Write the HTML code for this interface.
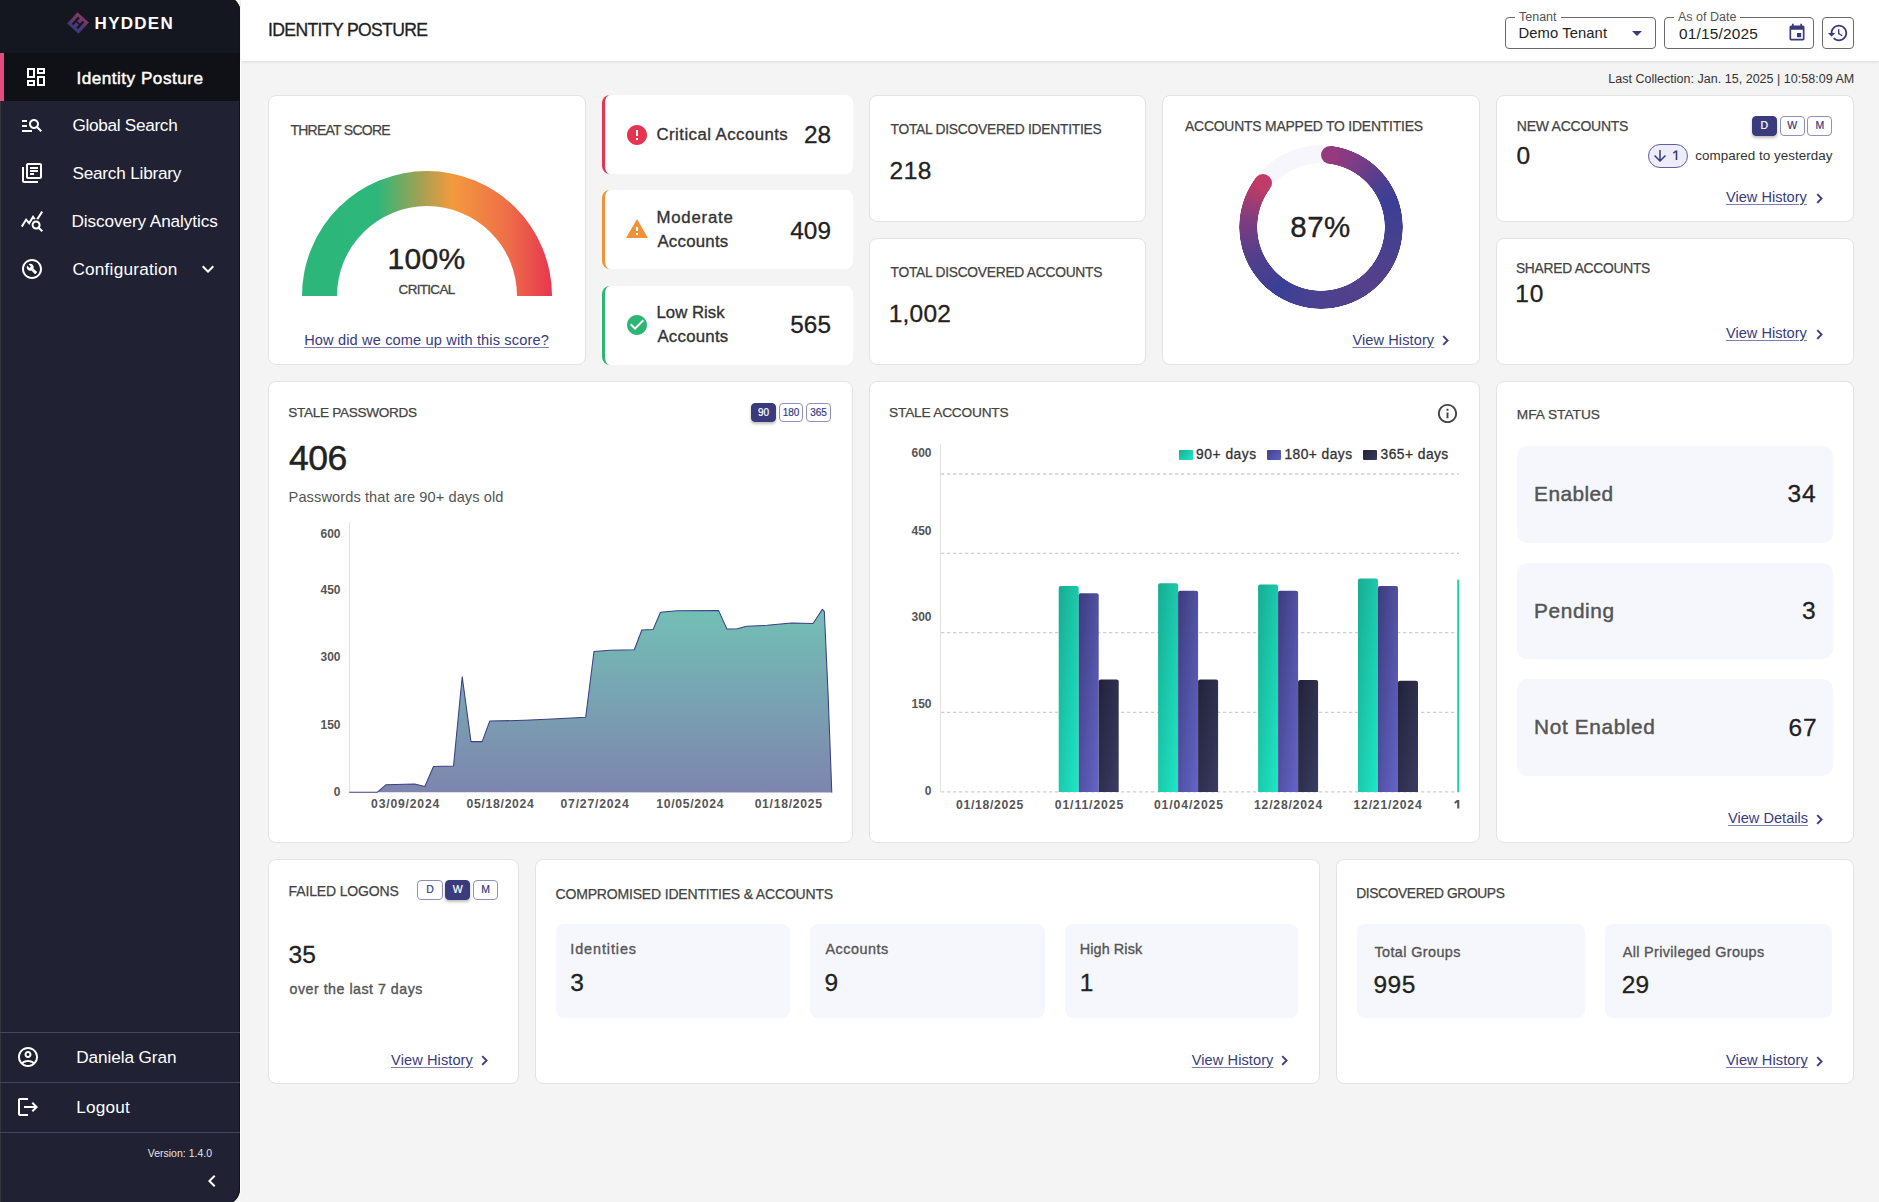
<!DOCTYPE html><html><head><meta charset="utf-8"><style>
*{box-sizing:border-box;margin:0;padding:0}
html,body{width:1879px;height:1202px;overflow:hidden;background:#f4f4f4;font-family:"Liberation Sans",sans-serif;}
.t{position:absolute;line-height:1;white-space:nowrap;}
.card{position:absolute;background:#fff;border:1px solid #e3e3e3;border-radius:8px;}
.lnk{text-decoration:underline;text-underline-offset:2px;text-decoration-thickness:1px;}

</style></head><body>
<div style="position:absolute;left:0;top:-3px;width:240px;height:1208px;background:#202133;border-radius:0 14px 16px 0;overflow:hidden;box-shadow:1px 0 0 #fff, inset -1px 0 0 #10111f, inset 1px 0 0 #34353f">
<div style="position:absolute;left:0;top:0;width:240px;height:56px;background:#151720"></div>
<div style="position:absolute;left:0;top:56px;width:240px;height:48px;background:#101116"></div>
<div style="position:absolute;left:0;top:56px;width:4px;height:48px;background:#e64b7f"></div>
<div style="position:absolute;left:0;top:1035px;width:240px;height:1px;background:#44455e"></div>
<div style="position:absolute;left:0;top:1085px;width:240px;height:1px;background:#44455e"></div>
<div style="position:absolute;left:0;top:1135px;width:240px;height:1px;background:#44455e"></div>
</div>
<svg style="position:absolute;left:66px;top:11px;" width="24" height="24" viewBox="0 0 24 24"><defs><linearGradient id="lg" x1="0" y1="0" x2="0.3" y2="1"><stop offset="0" stop-color="#a83e6c"/><stop offset="1" stop-color="#46408e"/></linearGradient></defs>
<g transform="rotate(42 12 12)"><rect x="4.3" y="4.3" width="15.4" height="15.4" fill="url(#lg)" opacity="0.82"/>
<path d="M7.8 7.3h2.3v3.9h3.8V7.3h2.3v9.4h-2.3v-3.9h-3.8v3.9H7.8z" fill="#151720"/></g></svg>
<div class="t" id="t0" style="top:15.01px;font-size:17px;color:#fff;font-weight:700;letter-spacing:1.26px;left:94.6px;">HYDDEN</div>
<svg style="position:absolute;left:24px;top:65px;" width="24" height="24" viewBox="0 0 24 24"><path fill="#fff" d="M19 5v2h-4V5h4M9 5v6H5V5h4m10 8v6h-4v-6h4M9 17v2H5v-2h4M21 3h-8v6h8V3zM11 3H3v10h8V3zm10 8h-8v10h8V11zm-10 4H3v6h8v-6z"/></svg>
<div class="t" id="t1" style="top:69.84px;font-size:17.2px;color:#fff;letter-spacing:0.48px;-webkit-text-stroke:0.45px #fff;left:76.39999999999999px;">Identity Posture</div>
<svg style="position:absolute;left:20px;top:113px;" width="24" height="24" viewBox="0 0 24 24"><path fill="#fff" d="M7 9H2V7h5v2zm0 3H2v2h5v-2zm13.59 7l-3.83-3.83c-.8.52-1.74.83-2.76.83-2.76 0-5-2.24-5-5s2.24-5 5-5 5 2.24 5 5c0 1.02-.31 1.96-.83 2.75L22 17.59 20.59 19zM17 11c0-1.65-1.35-3-3-3s-3 1.35-3 3 1.35 3 3 3 3-1.35 3-3zM2 19h10v-2H2v2z"/></svg>
<div class="t" id="t2" style="top:117.44px;font-size:17.2px;color:#fff;letter-spacing:-0.3px;left:72.39999999999999px;">Global Search</div>
<svg style="position:absolute;left:20px;top:161px;" width="24" height="24" viewBox="0 0 24 24"><path fill="#fff" d="M4 6H2v14c0 1.1.9 2 2 2h14v-2H4V6zm16-4H8c-1.1 0-2 .9-2 2v12c0 1.1.9 2 2 2h12c1.1 0 2-.9 2-2V4c0-1.1-.9-2-2-2zm0 14H8V4h12v12zM10 9h8v2h-8zm0 3h4v2h-4zm0-6h8v2h-8z"/></svg>
<div class="t" id="t3" style="top:165.44px;font-size:17.2px;color:#fff;letter-spacing:-0.208px;left:72.39999999999999px;">Search Library</div>
<svg style="position:absolute;left:20px;top:209px;" width="24" height="24" viewBox="0 0 24 24"><path fill="#fff" d="M19.88 18.47c.44-.7.7-1.51.7-2.39 0-2.49-2.01-4.5-4.5-4.5s-4.5 2.01-4.5 4.5 2.01 4.5 4.49 4.5c.88 0 1.7-.26 2.39-.7L21.58 23 23 21.58l-3.12-3.11zm-3.8.11c-1.38 0-2.5-1.12-2.5-2.5s1.12-2.5 2.5-2.5 2.5 1.12 2.5 2.5-1.120 2.5-2.5 2.5zm-.36-8.5c-.74.02-1.45.18-2.1.45l-.55-.83-3.8 6.18-3.01-3.52-3.63 5.81L1 17l5-8 3 3.5L13 6l2.72 4.08zm2.59.5c-.64-.28-1.33-.45-2.05-.49L21.38 2 23 3.18l-4.690 7.4z"/></svg>
<div class="t" id="t4" style="top:213.44px;font-size:17.2px;color:#fff;letter-spacing:-0.1px;left:71.5px;">Discovery Analytics</div>
<svg style="position:absolute;left:20px;top:257px;" width="24" height="24" viewBox="0 0 24 24"><path fill="#fff" d="M12 2C6.48 2 2 6.48 2 12s4.48 10 10 10 10-4.48 10-10S17.52 2 12 2zm0 18c-4.41 0-8-3.59-8-8s3.59-8 8-8 8 3.59 8 8-3.59 8-8 8zM13.49 11.38c.43-1.22.17-2.64-.81-3.62-1.11-1.11-2.79-1.3-4.1-.59l2.35 2.35-1.41 1.41-2.35-2.35c-.71 1.32-.52 2.99.59 4.1.98.98 2.4 1.24 3.62.81l3.41 3.41c.2.2.51.2.71 0l1.4-1.4c.2-.2.2-.51 0-.71l-3.41-3.41z"/></svg>
<div class="t" id="t5" style="top:261.44px;font-size:17.2px;color:#fff;letter-spacing:0.23px;left:72.39999999999999px;">Configuration</div>
<svg style="position:absolute;left:196px;top:257px;" width="24" height="24" viewBox="0 0 24 24"><path fill="#fff" d="M16.59 8.59L12 13.17 7.41 8.59 6 10l6 6 6-6z"/></svg>
<svg style="position:absolute;left:16px;top:1045px;" width="24" height="24" viewBox="0 0 24 24"><path fill="#fff" d="M12 2C6.48 2 2 6.48 2 12s4.48 10 10 10 10-4.48 10-10S17.52 2 12 2zM7.35 18.5C8.66 17.56 10.26 17 12 17s3.34.56 4.65 1.5c-1.310.94-2.91 1.5-4.65 1.5s-3.34-.56-4.65-1.5zm10.79-1.38C16.45 15.8 14.32 15 12 15s-4.45.8-6.14 2.12C4.7 15.73 4 13.95 4 12c0-4.42 3.58-8 8-8s8 3.58 8 8c0 1.95-.7 3.73-1.86 5.12zM12 6c-1.93 0-3.5 1.57-3.5 3.5S10.07 13 12 13s3.5-1.57 3.5-3.5S13.93 6 12 6zm0 5c-.83 0-1.5-.67-1.5-1.5S11.17 8 12 8s1.5.67 1.5 1.5S12.83 11 12 11z"/></svg>
<div class="t" id="t6" style="top:1048.94px;font-size:17.2px;color:#fff;letter-spacing:-0.084px;left:76.19999999999999px;">Daniela Gran</div>
<svg style="position:absolute;left:16px;top:1095px;" width="24" height="24" viewBox="0 0 24 24"><path fill="#fff" d="M17 7l-1.41 1.41L18.17 11H8v2h10.17l-2.58 2.58L17 17l5-5zM4 5h8V3H4c-1.1 0-2 .9-2 2v14c0 1.1.9 2 2 2h8v-2H4V5z"/></svg>
<div class="t" id="t7" style="top:1098.84px;font-size:17.2px;color:#fff;letter-spacing:0.18px;left:76.19999999999999px;">Logout</div>
<div class="t" id="t8" style="top:1148.31px;font-size:10.5px;color:#e6e6ea;right:1667.00px;">Version: 1.4.0</div>
<svg style="position:absolute;left:200px;top:1169px;" width="24" height="24" viewBox="0 0 24 24"><path fill="#fff" d="M15.41 7.41L14 6l-6 6 6 6 1.41-1.41L10.83 12z"/></svg>
<div style="position:absolute;left:241px;top:0;width:1638px;height:61px;background:#fff;box-shadow:0 1px 3px rgba(0,0,0,0.10)"></div>
<div class="t" id="t9" style="top:22.10px;font-size:17.6px;color:#222;letter-spacing:-0.6599999999999999px;-webkit-text-stroke:0.3px #222;left:268.1px;">IDENTITY POSTURE</div>
<div style="position:absolute;left:1505px;top:17px;width:151px;height:32px;border:1px solid #6a6a6a;border-radius:4px;background:#fff"></div>
<div class="t" style="left:1515px;top:10px;font-size:12.5px;color:#555;background:#fff;padding:0 4px;line-height:14px">Tenant</div>
<div class="t" id="t10" style="top:25.87px;font-size:14.8px;color:#222;letter-spacing:0.09px;left:1518.3999999999999px;">Demo Tenant</div>
<svg style="position:absolute;left:1625px;top:21px;" width="24" height="24" viewBox="0 0 24 24"><path fill="#393b7d" d="M7 10l5 5 5-5z"/></svg>
<div style="position:absolute;left:1664px;top:17px;width:150px;height:32px;border:1px solid #6a6a6a;border-radius:4px;background:#fff"></div>
<div class="t" style="left:1674px;top:10px;font-size:12.5px;color:#555;background:#fff;padding:0 4px;line-height:14px">As of Date</div>
<div class="t" id="t11" style="top:26.46px;font-size:15.4px;color:#222;letter-spacing:0.2px;left:1679.1px;">01/15/2025</div>
<svg style="position:absolute;left:1786.5px;top:23px;" width="20" height="20" viewBox="0 0 24 24"><path fill="#393b7d" d="M17 12h-5v5h5v-5zM16 1v2H8V1H6v2H5c-1.11 0-1.99.9-1.99 2L3 19c0 1.1.89 2 2 2h14c1.1 0 2-.9 2-2V5c0-1.1-.9-2-2-2h-1V1h-2zm3 18H5V8h14v11z"/></svg>
<div style="position:absolute;left:1822px;top:17px;width:32px;height:32px;border:1px solid #6a6a6a;border-radius:4px;background:#fff"></div>
<svg style="position:absolute;left:1827px;top:22px;" width="22" height="22" viewBox="0 0 24 24"><path fill="#393b7d" d="M13 3c-4.97 0-9 4.03-9 9H1l3.89 3.89.07.14L9 12H6c0-3.87 3.13-7 7-7s7 3.13 7 7-3.13 7-7 7c-1.93 0-3.68-.79-4.94-2.06l-1.42 1.42C8.27 19.99 10.51 21 13 21c4.97 0 9-4.03 9-9s-4.03-9-9-9zm-1 5v5l4.28 2.54.72-1.21-3.5-2.08V8H12z"/></svg>
<div class="t" id="t12" style="top:72.82px;font-size:12.5px;color:#333;letter-spacing:0.019px;right:24.80px;">Last Collection: Jan. 15, 2025 | 10:58:09 AM</div>
<div class="card" style="left:268px;top:95px;width:318px;height:270px;"></div>
<div class="t" id="t13" style="top:123.35px;font-size:14.0px;color:#444;letter-spacing:-0.736px;-webkit-text-stroke:0.25px #444;left:290.4px;">THREAT SCORE</div>
<svg style="position:absolute;left:302px;top:171px;" width="250" height="126" viewBox="302 171 250 126"><defs><linearGradient id="gg" x1="302" y1="0" x2="552" y2="0" gradientUnits="userSpaceOnUse">
<stop offset="0" stop-color="#2cb67a"/><stop offset="0.3" stop-color="#2eb77a"/><stop offset="0.48" stop-color="#a7a052"/><stop offset="0.6" stop-color="#f39a3d"/><stop offset="0.82" stop-color="#ee6f48"/><stop offset="1" stop-color="#e6374f"/></linearGradient></defs>
<path d="M302 296 A125 125 0 0 1 552 296 L517 296 A90 90 0 0 0 337 296 Z" fill="url(#gg)"/></svg>
<div class="t" id="t14" style="top:243.70px;font-size:30px;color:#222;letter-spacing:0.3px;-webkit-text-stroke:0.4px #222;left:126.55000000000001px;width:600px;text-align:center;">100%</div>
<div class="t" id="t15" style="top:283.36px;font-size:13.4px;color:#444;letter-spacing:-0.643px;-webkit-text-stroke:0.3px #444;left:126.55000000000001px;width:600px;text-align:center;">CRITICAL</div>
<div class="t" id="t16" style="top:333.44px;font-size:14.6px;color:#393b7d;letter-spacing:0.132px;left:126.55000000000001px;width:600px;text-align:center;text-decoration:underline;text-underline-offset:1.5px;text-decoration-thickness:1px;text-decoration-color:#7d7fae;">How did we come up with this score?</div>
<div style="position:absolute;left:602px;top:95px;width:251px;height:79px;background:#fff;border-radius:8px;border-left:3px solid #e5344f"></div>
<div style="position:absolute;left:602px;top:190px;width:251px;height:79px;background:#fff;border-radius:8px;border-left:3px solid #f0923a"></div>
<div style="position:absolute;left:602px;top:286px;width:251px;height:79px;background:#fff;border-radius:8px;border-left:3px solid #2bb673"></div>
<svg style="position:absolute;left:625px;top:123px;" width="24" height="24" viewBox="0 0 24 24"><path fill="#e5344f" d="M12 2C6.48 2 2 6.480 2 12s4.48 10 10 10 10-4.48 10-10S17.52 2 12 2zm1 15h-2v-2h2v2zm0-4h-2V7h2v6z"/></svg>
<div class="t" id="t17" style="top:126.98px;font-size:16.8px;color:#333;letter-spacing:0.45px;-webkit-text-stroke:0.35px #333;left:656.5px;">Critical Accounts</div>
<div class="t" id="t18" style="top:123.23px;font-size:24.3px;color:#222;-webkit-text-stroke:0.3px #222;right:1048.10px;">28</div>
<svg style="position:absolute;left:625px;top:217px;" width="24" height="24" viewBox="0 0 24 24"><path fill="#f0923a" d="M1 21h22L12 2 1 21zm12-3h-2v-2h2v2zm0-4h-2v-4h2v4z"/></svg>
<div class="t" id="t19" style="top:209.98px;font-size:16.8px;color:#333;letter-spacing:0.771px;-webkit-text-stroke:0.35px #333;left:656.5px;">Moderate</div>
<div class="t" id="t20" style="top:233.98px;font-size:16.8px;color:#333;letter-spacing:0.255px;-webkit-text-stroke:0.35px #333;left:657.4px;">Accounts</div>
<div class="t" id="t21" style="top:218.63px;font-size:24.3px;color:#222;-webkit-text-stroke:0.3px #222;right:1048.10px;">409</div>
<svg style="position:absolute;left:625px;top:313px;" width="24" height="24" viewBox="0 0 24 24"><path fill="#2bb673" d="M12 2C6.48 2 2 6.48 2 12s4.48 10 10 10 10-4.48 10-10S17.52 2 12 2zm-2 15l-5-5 1.41-1.41L10 14.17l7.59-7.59L19 8l-9 9z"/></svg>
<div class="t" id="t22" style="top:304.98px;font-size:16.8px;color:#333;letter-spacing:0.002px;-webkit-text-stroke:0.35px #333;left:656.5px;">Low Risk</div>
<div class="t" id="t23" style="top:328.98px;font-size:16.8px;color:#333;letter-spacing:0.255px;-webkit-text-stroke:0.35px #333;left:657.4px;">Accounts</div>
<div class="t" id="t24" style="top:312.63px;font-size:24.3px;color:#222;-webkit-text-stroke:0.3px #222;right:1048.10px;">565</div>
<div class="card" style="left:869px;top:95px;width:277px;height:127px;"></div>
<div class="t" id="t25" style="top:122.82px;font-size:13.8px;color:#444;letter-spacing:-0.242px;-webkit-text-stroke:0.25px #444;left:890.5px;">TOTAL DISCOVERED IDENTITIES</div>
<div class="t" id="t26" style="top:159.46px;font-size:24.5px;color:#222;letter-spacing:0.45px;-webkit-text-stroke:0.3px #222;left:889.6px;">218</div>
<div class="card" style="left:869px;top:238px;width:277px;height:127px;"></div>
<div class="t" id="t27" style="top:265.52px;font-size:13.8px;color:#444;letter-spacing:-0.262px;-webkit-text-stroke:0.25px #444;left:890.5px;">TOTAL DISCOVERED ACCOUNTS</div>
<div class="t" id="t28" style="top:301.86px;font-size:24.5px;color:#222;letter-spacing:0.225px;-webkit-text-stroke:0.3px #222;left:888.7px;">1,002</div>
<div class="card" style="left:1162px;top:95px;width:318px;height:270px;"></div>
<div class="t" id="t29" style="top:120.23px;font-size:13.9px;color:#444;letter-spacing:-0.192px;-webkit-text-stroke:0.25px #444;left:1185.0px;">ACCOUNTS MAPPED TO IDENTITIES</div>
<div style="position:absolute;left:1239px;top:145px;width:164px;height:164px;border-radius:50%;
background:conic-gradient(from 0deg,#f6f6fc 0deg,#f6f6fc 7deg,#963a7d 7deg,#7a3c86 30deg,#4a3f90 55deg,#3b3f96 70deg,#46408f 100deg,#55408a 140deg,#4b4190 185deg,#3a3f97 215deg,#573f8a 250deg,#7d3d80 275deg,#b03c6d 297deg,#c03b68 307deg,#f6f6fc 307deg,#f6f6fc 360deg);
-webkit-mask:radial-gradient(circle,transparent 63.5px,#000 64px,#000 81.5px,transparent 82px);mask:radial-gradient(circle,transparent 63.5px,#000 64px,#000 81.5px,transparent 82px)"></div>
<div style="position:absolute;left:1320.90px;top:145.54px;width:18px;height:18px;border-radius:50%;background:#963a7d"></div>
<div style="position:absolute;left:1253.70px;top:174.07px;width:18px;height:18px;border-radius:50%;background:#c03b68"></div>
<div class="t" id="t30" style="top:211.53px;font-size:29.5px;color:#222;letter-spacing:0.45px;-webkit-text-stroke:0.35px #222;left:1020.55px;width:600px;text-align:center;">87%</div>
<div class="t" id="t31" style="top:332.84px;font-size:14.6px;color:#393b7d;letter-spacing:0.084px;left:1352.4px;text-decoration:underline;text-underline-offset:1.5px;text-decoration-thickness:1px;text-decoration-color:#7d7fae;">View History</div>
<svg style="position:absolute;left:1435.7px;top:330.95px;" width="19" height="19" viewBox="0 0 24 24"><path fill="#393b7d" stroke="#393b7d" stroke-width="0.6" d="M10 6L8.59 7.41 13.17 12l-4.58 4.59L10 18l6-6z"/></svg>
<div class="card" style="left:1496px;top:95px;width:358px;height:127px;"></div>
<div class="t" id="t32" style="top:119.45px;font-size:14.0px;color:#444;letter-spacing:-0.244px;-webkit-text-stroke:0.25px #444;left:1516.8px;">NEW ACCOUNTS</div>
<div style="position:absolute;left:1751.80px;top:116.2px;width:25px;height:19.5px;border-radius:4px;background:#393b7d;color:#fff;border:1px solid #393b7d;box-shadow:0 2px 3px rgba(0,0,0,0.25);font-size:10.5px;-webkit-text-stroke:0.2px currentColor;line-height:17.5px;text-align:center">D</div>
<div style="position:absolute;left:1779.60px;top:116.2px;width:25px;height:19.5px;border-radius:4px;background:#fff;color:#393b7d;border:1px solid #8e90c0;font-size:10.5px;-webkit-text-stroke:0.2px currentColor;line-height:17.5px;text-align:center">W</div>
<div style="position:absolute;left:1807.40px;top:116.2px;width:25px;height:19.5px;border-radius:4px;background:#fff;color:#393b7d;border:1px solid #8e90c0;font-size:10.5px;-webkit-text-stroke:0.2px currentColor;line-height:17.5px;text-align:center">M</div>
<div class="t" id="t33" style="top:144.06px;font-size:24.5px;color:#222;letter-spacing:0.9px;-webkit-text-stroke:0.3px #222;left:1516.6px;">0</div>
<div style="position:absolute;left:1648px;top:144px;width:40px;height:24px;border-radius:12px;background:#ecedf9;border:1px solid #5d5f9e"></div>
<svg style="position:absolute;left:1651px;top:147px;" width="18" height="18" viewBox="0 0 24 24"><path fill="#393b7d" d="M20 12l-1.41-1.41L13 16.17V4h-2v12.17l-5.58-5.59L4 12l8 8 8-8z"/></svg>
<svg style="position:absolute;left:1670px;top:148px;" width="10" height="14" viewBox="1670 148 10 14"><path fill="#393b7d" d="M1675.6 150.4h1.7v9.7h-1.6v-7.9l-2.0 1.5-0.8-1.1z"/></svg>
<div class="t" id="t34" style="top:148.86px;font-size:13.4px;color:#333;letter-spacing:0.046px;right:46.50px;">compared to yesterday</div>
<div class="t" id="t35" style="top:189.64px;font-size:14.6px;color:#393b7d;letter-spacing:0.004px;left:1726.0px;text-decoration:underline;text-underline-offset:1.5px;text-decoration-thickness:1px;text-decoration-color:#7d7fae;">View History</div>
<svg style="position:absolute;left:1809.8px;top:188.75px;" width="19" height="19" viewBox="0 0 24 24"><path fill="#393b7d" stroke="#393b7d" stroke-width="0.6" d="M10 6L8.59 7.41 13.17 12l-4.58 4.59L10 18l6-6z"/></svg>
<div class="card" style="left:1496px;top:238px;width:358px;height:127px;"></div>
<div class="t" id="t36" style="top:261.82px;font-size:13.8px;color:#444;letter-spacing:-0.255px;-webkit-text-stroke:0.25px #444;left:1515.8999999999999px;">SHARED ACCOUNTS</div>
<div class="t" id="t37" style="top:282.46px;font-size:24.5px;color:#222;letter-spacing:0.9px;-webkit-text-stroke:0.3px #222;left:1515.2px;">10</div>
<div class="t" id="t38" style="top:325.84px;font-size:14.6px;color:#393b7d;letter-spacing:0.004px;left:1726.0px;text-decoration:underline;text-underline-offset:1.5px;text-decoration-thickness:1px;text-decoration-color:#7d7fae;">View History</div>
<svg style="position:absolute;left:1809.8px;top:324.75px;" width="19" height="19" viewBox="0 0 24 24"><path fill="#393b7d" stroke="#393b7d" stroke-width="0.6" d="M10 6L8.59 7.41 13.17 12l-4.58 4.59L10 18l6-6z"/></svg>
<div class="card" style="left:268px;top:381px;width:585px;height:462px;"></div>
<div class="t" id="t39" style="top:405.69px;font-size:13.6px;color:#444;letter-spacing:-0.32px;-webkit-text-stroke:0.25px #444;left:288.3px;">STALE PASSWORDS</div>
<div style="position:absolute;left:751.30px;top:402.7px;width:24.5px;height:19px;border-radius:4px;background:#393b7d;color:#fff;border:1px solid #393b7d;box-shadow:0 2px 3px rgba(0,0,0,0.25);font-size:10px;-webkit-text-stroke:0.2px currentColor;line-height:17px;text-align:center">90</div>
<div style="position:absolute;left:778.80px;top:402.7px;width:24.5px;height:19px;border-radius:4px;background:#fff;color:#393b7d;border:1px solid #8e90c0;font-size:10px;-webkit-text-stroke:0.2px currentColor;line-height:17px;text-align:center">180</div>
<div style="position:absolute;left:806.30px;top:402.7px;width:24.5px;height:19px;border-radius:4px;background:#fff;color:#393b7d;border:1px solid #8e90c0;font-size:10px;-webkit-text-stroke:0.2px currentColor;line-height:17px;text-align:center">365</div>
<div class="t" id="t40" style="top:441.15px;font-size:35.5px;color:#222;letter-spacing:-0.45px;-webkit-text-stroke:0.5px #222;left:289.0px;">406</div>
<div class="t" id="t41" style="top:489.84px;font-size:14.6px;color:#555;letter-spacing:0.09px;left:288.6px;">Passwords that are 90+ days old</div>
<div style="position:absolute;left:348.5px;top:522px;width:1.5px;height:270px;background:#e2e2e2"></div>
<div class="t" id="t42" style="top:528.04px;font-size:12px;color:#555;font-weight:700;right:1538.50px;">600</div>
<div class="t" id="t43" style="top:584.24px;font-size:12px;color:#555;font-weight:700;right:1538.50px;">450</div>
<div class="t" id="t44" style="top:651.14px;font-size:12px;color:#555;font-weight:700;right:1538.50px;">300</div>
<div class="t" id="t45" style="top:718.94px;font-size:12px;color:#555;font-weight:700;right:1538.50px;">150</div>
<div class="t" id="t46" style="top:785.84px;font-size:12px;color:#555;font-weight:700;right:1538.50px;">0</div>
<svg style="position:absolute;left:0px;top:0px;pointer-events:none" width="1879" height="1202" viewBox="0 0 1879 1202"><defs><linearGradient id="ag" x1="0" y1="605" x2="0" y2="792" gradientUnits="userSpaceOnUse"><stop offset="0" stop-color="#72c1b5"/><stop offset="1" stop-color="#7e85ae"/></linearGradient></defs>
<path d="M349.2 792.2 L377.4 792.2 L386.1 784.7 L404.8 784.2 L414.8 784.0 L424.8 786.5 L433.5 766.5 L453.5 766.0 L462.2 676.7 L471.0 741.6 L482.2 741.6 L489.7 721.1 L524.6 720.3 L552.0 719.1 L585.7 717.3 L594.0 651.5 L610.0 650.2 L634.3 649.7 L641.8 630.0 L653.0 629.6 L660.5 612.2 L677.3 610.7 L718.5 610.4 L727.0 629.1 L737.2 628.7 L746.6 626.3 L767.2 625.3 L791.5 623.0 L813.0 623.5 L822.4 609.4 L824.3 611.3 L828.0 691.7 L831.8 792.5 Z" fill="url(#ag)"/><path d="M349.2 792.2 L377.4 792.2 L386.1 784.7 L404.8 784.2 L414.8 784.0 L424.8 786.5 L433.5 766.5 L453.5 766.0 L462.2 676.7 L471.0 741.6 L482.2 741.6 L489.7 721.1 L524.6 720.3 L552.0 719.1 L585.7 717.3 L594.0 651.5 L610.0 650.2 L634.3 649.7 L641.8 630.0 L653.0 629.6 L660.5 612.2 L677.3 610.7 L718.5 610.4 L727.0 629.1 L737.2 628.7 L746.6 626.3 L767.2 625.3 L791.5 623.0 L813.0 623.5 L822.4 609.4 L824.3 611.3 L828.0 691.7 L831.8 792.5" fill="none" stroke="#3d3f82" stroke-width="1.05" stroke-linejoin="round"/></svg>
<div class="t" id="t47" style="top:797.67px;font-size:12.2px;color:#555;font-weight:700;letter-spacing:0.8px;left:105.60000000000002px;width:600px;text-align:center;">03/09/2024</div>
<div class="t" id="t48" style="top:797.67px;font-size:12.2px;color:#555;font-weight:700;letter-spacing:0.7px;left:200.55px;width:600px;text-align:center;">05/18/2024</div>
<div class="t" id="t49" style="top:797.67px;font-size:12.2px;color:#555;font-weight:700;letter-spacing:0.8px;left:295.0px;width:600px;text-align:center;">07/27/2024</div>
<div class="t" id="t50" style="top:797.67px;font-size:12.2px;color:#555;font-weight:700;letter-spacing:0.7px;left:390.25px;width:600px;text-align:center;">10/05/2024</div>
<div class="t" id="t51" style="top:797.67px;font-size:12.2px;color:#555;font-weight:700;letter-spacing:0.7px;left:488.6500000000001px;width:600px;text-align:center;">01/18/2025</div>
<div class="card" style="left:869px;top:381px;width:611px;height:462px;"></div>
<div class="t" id="t52" style="top:405.60px;font-size:13.7px;color:#444;letter-spacing:-0.207px;-webkit-text-stroke:0.25px #444;left:889.1px;">STALE ACCOUNTS</div>
<svg style="position:absolute;left:1435.6px;top:402px;" width="23" height="23" viewBox="0 0 24 24"><path fill="#444" d="M11 7h2v2h-2zm0 4h2v6h-2zm1-9C6.48 2 2 6.48 2 12s4.48 10 10 10 10-4.48 10-10S17.52 2 12 2zm0 18c-4.41 0-8-3.590-8-8s3.59-8 8-8 8 3.59 8 8-3.59 8-8 8z"/></svg>
<div style="position:absolute;left:1179px;top:449.5px;width:14px;height:10.5px;background:linear-gradient(135deg,#1aae94,#1ee8c6);border-radius:1px"></div>
<div class="t" id="t53" style="top:447.52px;font-size:13.8px;color:#333;letter-spacing:0.516px;-webkit-text-stroke:0.3px #333;left:1196.1px;">90+ days</div>
<div style="position:absolute;left:1267.2px;top:449.5px;width:14.0px;height:10.5px;background:linear-gradient(135deg,#40408a,#6262c4);border-radius:1px"></div>
<div class="t" id="t54" style="top:447.52px;font-size:13.8px;color:#333;letter-spacing:0.454px;-webkit-text-stroke:0.3px #333;left:1284.3999999999999px;">180+ days</div>
<div style="position:absolute;left:1362.8px;top:449.5px;width:14.0px;height:10.5px;background:linear-gradient(135deg,#22233a,#3b3c62);border-radius:1px"></div>
<div class="t" id="t55" style="top:447.52px;font-size:13.8px;color:#333;letter-spacing:0.45px;-webkit-text-stroke:0.3px #333;left:1380.6px;">365+ days</div>
<div style="position:absolute;left:939.5px;top:444px;width:1.5px;height:348px;background:#e2e2e2"></div>
<svg style="position:absolute;left:0px;top:0px;pointer-events:none" width="1879" height="1202" viewBox="0 0 1879 1202"><line x1="941" y1="474" x2="1459" y2="474" stroke="#cfcfcf" stroke-width="1.3" stroke-dasharray="3.3 2.7"/><line x1="941" y1="553.3" x2="1459" y2="553.3" stroke="#cfcfcf" stroke-width="1.3" stroke-dasharray="3.3 2.7"/><line x1="941" y1="632.6" x2="1459" y2="632.6" stroke="#cfcfcf" stroke-width="1.3" stroke-dasharray="3.3 2.7"/><line x1="941" y1="712.4" x2="1459" y2="712.4" stroke="#cfcfcf" stroke-width="1.3" stroke-dasharray="3.3 2.7"/><line x1="941" y1="791.8" x2="1459" y2="791.8" stroke="#cfcfcf" stroke-width="1.3" stroke-dasharray="3.3 2.7"/></svg>
<div class="t" id="t56" style="top:447.04px;font-size:12px;color:#555;font-weight:700;right:947.50px;">600</div>
<div class="t" id="t57" style="top:524.94px;font-size:12px;color:#555;font-weight:700;right:947.50px;">450</div>
<div class="t" id="t58" style="top:611.14px;font-size:12px;color:#555;font-weight:700;right:947.50px;">300</div>
<div class="t" id="t59" style="top:698.44px;font-size:12px;color:#555;font-weight:700;right:947.50px;">150</div>
<div class="t" id="t60" style="top:785.34px;font-size:12px;color:#555;font-weight:700;right:947.50px;">0</div>
<svg style="position:absolute;left:0px;top:0px;pointer-events:none" width="1879" height="1202" viewBox="0 0 1879 1202"><defs>
<linearGradient id="b1" x1="0" y1="0" x2="1" y2="1"><stop offset="0" stop-color="#18ab92"/><stop offset="1" stop-color="#1ee8c6"/></linearGradient>
<linearGradient id="b2" x1="0" y1="0" x2="1" y2="1"><stop offset="0" stop-color="#3c3c7e"/><stop offset="1" stop-color="#6565c8"/></linearGradient>
<linearGradient id="b3" x1="0" y1="0" x2="1" y2="1"><stop offset="0" stop-color="#212238"/><stop offset="1" stop-color="#3b3c62"/></linearGradient>
</defs><path d="M1058.7 792 V588.0 Q1058.7 586.0 1060.7 586.0 H1076.7 Q1078.7 586.0 1078.7 588.0 V792 Z" fill="url(#b1)"/><path d="M1078.7 792 V595.3 Q1078.7 593.3 1080.7 593.3 H1096.7 Q1098.7 593.3 1098.7 595.3 V792 Z" fill="url(#b2)"/><path d="M1098.7 792 V681.6 Q1098.7 679.6 1100.7 679.6 H1116.7 Q1118.7 679.6 1118.7 681.6 V792 Z" fill="url(#b3)"/><path d="M1158.1 792 V585.3 Q1158.1 583.3 1160.1 583.3 H1176.1 Q1178.1 583.3 1178.1 585.3 V792 Z" fill="url(#b1)"/><path d="M1178.1 792 V592.8 Q1178.1 590.8 1180.1 590.8 H1196.1 Q1198.1 590.8 1198.1 592.8 V792 Z" fill="url(#b2)"/><path d="M1198.1 792 V681.6 Q1198.1 679.6 1200.1 679.6 H1216.1 Q1218.1 679.6 1218.1 681.6 V792 Z" fill="url(#b3)"/><path d="M1258.1 792 V586.4 Q1258.1 584.4 1260.1 584.4 H1276.1 Q1278.1 584.4 1278.1 586.4 V792 Z" fill="url(#b1)"/><path d="M1278.1 792 V592.7 Q1278.1 590.7 1280.1 590.7 H1296.1 Q1298.1 590.7 1298.1 592.7 V792 Z" fill="url(#b2)"/><path d="M1298.1 792 V682.0 Q1298.1 680.0 1300.1 680.0 H1316.1 Q1318.1 680.0 1318.1 682.0 V792 Z" fill="url(#b3)"/><path d="M1358.0 792 V580.5 Q1358.0 578.5 1360.0 578.5 H1376.0 Q1378.0 578.5 1378.0 580.5 V792 Z" fill="url(#b1)"/><path d="M1378.0 792 V588.0 Q1378.0 586.0 1380.0 586.0 H1396.0 Q1398.0 586.0 1398.0 588.0 V792 Z" fill="url(#b2)"/><path d="M1398.0 792 V682.8 Q1398.0 680.8 1400.0 680.8 H1416.0 Q1418.0 680.8 1418.0 682.8 V792 Z" fill="url(#b3)"/><rect x="1457.2" y="579.7" width="1.8" height="212.3" fill="#1dd0ae"/></svg>
<div class="t" id="t61" style="top:798.57px;font-size:12.2px;color:#555;font-weight:700;letter-spacing:0.7px;left:689.95px;width:600px;text-align:center;">01/18/2025</div>
<div class="t" id="t62" style="top:798.57px;font-size:12.2px;color:#555;font-weight:700;letter-spacing:0.9px;left:789.45px;width:600px;text-align:center;">01/11/2025</div>
<div class="t" id="t63" style="top:798.57px;font-size:12.2px;color:#555;font-weight:700;letter-spacing:0.9px;left:888.95px;width:600px;text-align:center;">01/04/2025</div>
<div class="t" id="t64" style="top:798.57px;font-size:12.2px;color:#555;font-weight:700;letter-spacing:0.8px;left:988.5px;width:600px;text-align:center;">12/28/2024</div>
<div class="t" id="t65" style="top:798.57px;font-size:12.2px;color:#555;font-weight:700;letter-spacing:0.8px;left:1088.0px;width:600px;text-align:center;">12/21/2024</div>
<svg style="position:absolute;left:1452px;top:798px;" width="10" height="12" viewBox="1452 798 10 12"><path fill="#555" d="M1457.0 799.9h2.3v8.7h-2.1v-6.4l-2.0 1.5-1.0-1.4z"/></svg>
<div class="card" style="left:1496px;top:381px;width:358px;height:462px;"></div>
<div class="t" id="t66" style="top:408.40px;font-size:13.7px;color:#444;-webkit-text-stroke:0.25px #444;left:1516.8px;">MFA STATUS</div>
<div style="position:absolute;left:1517px;top:446px;width:316px;height:96.5px;background:#f6f7fc;border-radius:10px"></div>
<div class="t" id="t67" style="top:483.99px;font-size:20.8px;color:#555;letter-spacing:0.45px;-webkit-text-stroke:0.45px #555;left:1534.1px;">Enabled</div>
<div class="t" id="t68" style="top:482.46px;font-size:24.5px;color:#222;letter-spacing:0.9px;-webkit-text-stroke:0.3px #222;right:62.40px;">34</div>
<div style="position:absolute;left:1517px;top:562.8px;width:316px;height:96.5px;background:#f6f7fc;border-radius:10px"></div>
<div class="t" id="t69" style="top:600.79px;font-size:20.8px;color:#555;letter-spacing:0.6px;-webkit-text-stroke:0.45px #555;left:1534.1px;">Pending</div>
<div class="t" id="t70" style="top:599.26px;font-size:24.5px;color:#222;letter-spacing:9.0px;-webkit-text-stroke:0.3px #222;right:54.30px;">3</div>
<div style="position:absolute;left:1517px;top:679.2px;width:316px;height:96.5px;background:#f6f7fc;border-radius:10px"></div>
<div class="t" id="t71" style="top:717.19px;font-size:20.8px;color:#555;letter-spacing:0.63px;-webkit-text-stroke:0.45px #555;left:1534.1px;">Not Enabled</div>
<div class="t" id="t72" style="top:715.66px;font-size:24.5px;color:#222;letter-spacing:0.9px;-webkit-text-stroke:0.3px #222;right:61.50px;">67</div>
<div class="t" id="t73" style="top:811.24px;font-size:14.6px;color:#393b7d;letter-spacing:0.002px;left:1728.0px;text-decoration:underline;text-underline-offset:1.5px;text-decoration-thickness:1px;text-decoration-color:#7d7fae;">View Details</div>
<svg style="position:absolute;left:1809.8px;top:809.75px;" width="19" height="19" viewBox="0 0 24 24"><path fill="#393b7d" stroke="#393b7d" stroke-width="0.6" d="M10 6L8.59 7.41 13.17 12l-4.58 4.59L10 18l6-6z"/></svg>
<div class="card" style="left:268px;top:859px;width:251px;height:225px;"></div>
<div class="t" id="t74" style="top:883.75px;font-size:14.0px;color:#444;letter-spacing:-0.145px;-webkit-text-stroke:0.25px #444;left:288.6px;">FAILED LOGONS</div>
<div style="position:absolute;left:417.30px;top:880.1px;width:25.3px;height:19.5px;border-radius:4px;background:#fff;color:#393b7d;border:1px solid #8e90c0;font-size:10.5px;-webkit-text-stroke:0.2px currentColor;line-height:17.5px;text-align:center">D</div>
<div style="position:absolute;left:445.10px;top:880.1px;width:25.3px;height:19.5px;border-radius:4px;background:#393b7d;color:#fff;border:1px solid #393b7d;box-shadow:0 2px 3px rgba(0,0,0,0.25);font-size:10.5px;-webkit-text-stroke:0.2px currentColor;line-height:17.5px;text-align:center">W</div>
<div style="position:absolute;left:472.90px;top:880.1px;width:25.3px;height:19.5px;border-radius:4px;background:#fff;color:#393b7d;border:1px solid #8e90c0;font-size:10.5px;-webkit-text-stroke:0.2px currentColor;line-height:17.5px;text-align:center">M</div>
<div class="t" id="t75" style="top:943.46px;font-size:24.5px;color:#222;-webkit-text-stroke:0.3px #222;left:288.6px;">35</div>
<div class="t" id="t76" style="top:982.18px;font-size:14.2px;color:#555;letter-spacing:0.519px;-webkit-text-stroke:0.35px #555;left:289.5px;">over the last 7 days</div>
<div class="t" id="t77" style="top:1052.84px;font-size:14.6px;color:#393b7d;letter-spacing:0.084px;left:391.1px;text-decoration:underline;text-underline-offset:1.5px;text-decoration-thickness:1px;text-decoration-color:#7d7fae;">View History</div>
<svg style="position:absolute;left:474.6px;top:1051.25px;" width="19" height="19" viewBox="0 0 24 24"><path fill="#393b7d" stroke="#393b7d" stroke-width="0.6" d="M10 6L8.59 7.41 13.17 12l-4.58 4.59L10 18l6-6z"/></svg>
<div class="card" style="left:535px;top:859px;width:785px;height:225px;"></div>
<div class="t" id="t78" style="top:886.65px;font-size:14.0px;color:#444;letter-spacing:-0.17px;-webkit-text-stroke:0.25px #444;left:555.5px;">COMPROMISED IDENTITIES &amp; ACCOUNTS</div>
<div style="position:absolute;left:556.2px;top:924px;width:233.5999999999999px;height:94px;background:#f6f7fc;border-radius:8px"></div>
<div class="t" id="t79" style="top:942.11px;font-size:14.4px;color:#555;letter-spacing:0.9px;-webkit-text-stroke:0.35px #555;left:570.3000000000001px;">Identities</div>
<div class="t" id="t80" style="top:971.06px;font-size:24.5px;color:#222;letter-spacing:9.9px;-webkit-text-stroke:0.3px #222;left:570.3000000000001px;">3</div>
<div style="position:absolute;left:809.5px;top:924px;width:235.20000000000005px;height:94px;background:#f6f7fc;border-radius:8px"></div>
<div class="t" id="t81" style="top:942.11px;font-size:14.4px;color:#555;letter-spacing:0.514px;-webkit-text-stroke:0.35px #555;left:825.4px;">Accounts</div>
<div class="t" id="t82" style="top:971.06px;font-size:24.5px;color:#222;letter-spacing:9.9px;-webkit-text-stroke:0.3px #222;left:824.5px;">9</div>
<div style="position:absolute;left:1064.7px;top:924px;width:233.5px;height:94px;background:#f6f7fc;border-radius:8px"></div>
<div class="t" id="t83" style="top:942.11px;font-size:14.4px;color:#555;letter-spacing:0.116px;-webkit-text-stroke:0.35px #555;left:1079.7px;">High Risk</div>
<div class="t" id="t84" style="top:971.06px;font-size:24.5px;color:#222;letter-spacing:-7.2px;-webkit-text-stroke:0.3px #222;left:1079.7px;">1</div>
<div class="t" id="t85" style="top:1052.84px;font-size:14.6px;color:#393b7d;letter-spacing:0.082px;left:1191.7px;text-decoration:underline;text-underline-offset:1.5px;text-decoration-thickness:1px;text-decoration-color:#7d7fae;">View History</div>
<svg style="position:absolute;left:1275.2px;top:1051.25px;" width="19" height="19" viewBox="0 0 24 24"><path fill="#393b7d" stroke="#393b7d" stroke-width="0.6" d="M10 6L8.59 7.41 13.17 12l-4.58 4.59L10 18l6-6z"/></svg>
<div class="card" style="left:1336px;top:859px;width:518px;height:225px;"></div>
<div class="t" id="t86" style="top:886.72px;font-size:13.8px;color:#444;letter-spacing:-0.394px;-webkit-text-stroke:0.25px #444;left:1356.3px;">DISCOVERED GROUPS</div>
<div style="position:absolute;left:1357.2px;top:924px;width:227.5999999999999px;height:94px;background:#f6f7fc;border-radius:8px"></div>
<div class="t" id="t87" style="top:944.61px;font-size:14.4px;color:#555;letter-spacing:0.409px;-webkit-text-stroke:0.35px #555;left:1374.4px;">Total Groups</div>
<div class="t" id="t88" style="top:973.16px;font-size:24.5px;color:#222;letter-spacing:0.45px;-webkit-text-stroke:0.3px #222;left:1373.5px;">995</div>
<div style="position:absolute;left:1604.6px;top:924px;width:227.9000000000001px;height:94px;background:#f6f7fc;border-radius:8px"></div>
<div class="t" id="t89" style="top:944.61px;font-size:14.4px;color:#555;letter-spacing:0.355px;-webkit-text-stroke:0.35px #555;left:1622.7px;">All Privileged Groups</div>
<div class="t" id="t90" style="top:973.16px;font-size:24.5px;color:#222;-webkit-text-stroke:0.3px #222;left:1621.8px;">29</div>
<div class="t" id="t91" style="top:1053.44px;font-size:14.6px;color:#393b7d;letter-spacing:0.082px;left:1726.0px;text-decoration:underline;text-underline-offset:1.5px;text-decoration-thickness:1px;text-decoration-color:#7d7fae;">View History</div>
<svg style="position:absolute;left:1809.8px;top:1051.75px;" width="19" height="19" viewBox="0 0 24 24"><path fill="#393b7d" stroke="#393b7d" stroke-width="0.6" d="M10 6L8.59 7.41 13.17 12l-4.58 4.59L10 18l6-6z"/></svg>
</body></html>
